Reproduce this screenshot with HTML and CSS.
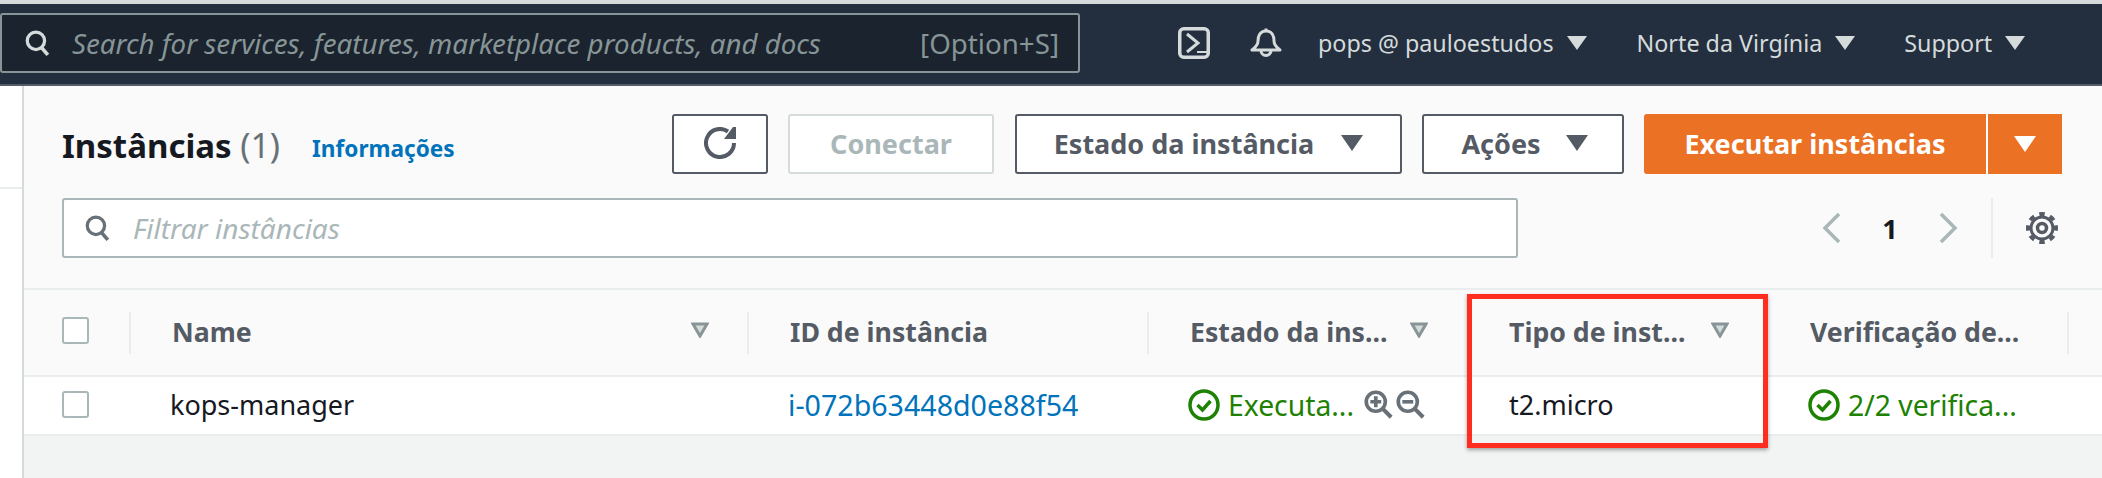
FILE: index.html
```html
<!DOCTYPE html>
<html lang="pt">
<head>
<meta charset="utf-8">
<title>Instâncias</title>
<link rel="stylesheet" href="styles.css">
</head>
<body>
<header class="nav">
  <div class="search">
    <svg class="search-icon" viewBox="0 0 24 24" width="26" height="30"><circle cx="11" cy="10" r="8" fill="none" stroke="currentColor" stroke-width="3"/><path d="M16 16l6 7" stroke="currentColor" stroke-width="3.4" fill="none"/></svg>
    <span class="search-text">Search for services, features, marketplace products, and docs</span>
    <span class="search-key">[Option+S]</span>
  </div>
  <div class="nav-right">
    <svg class="nav-shell" viewBox="0 0 32 32" width="32" height="32"><rect x="1.750" y="1.750" width="28.500" height="28.500" rx="4" fill="none" stroke="currentColor" stroke-width="3.500"/><path d="M9 7l11 9-11 9" fill="none" stroke="currentColor" stroke-width="3"/><path d="M19 25h10" fill="none" stroke="currentColor" stroke-width="2"/></svg>
    <svg class="nav-bell" viewBox="0 0 32 32" width="32" height="32"><path d="M16 1.500v3M16 4c-6 0-8 5-8 10 0 4-2 6-6 9h28c-4-3-6-5-6-9 0-5-2-10-8-10z" fill="none" stroke="currentColor" stroke-width="3" stroke-linejoin="round"/><path d="M11 23.500a5 5 0 1 0 10 0" fill="none" stroke="currentColor" stroke-width="3"/></svg>
    <span class="nav-item nav-user">pops @ pauloestudos<i class="tri tri-nav"></i></span>
    <span class="nav-item nav-region">Norte da Virgínia<i class="tri tri-nav"></i></span>
    <span class="nav-item nav-support">Support<i class="tri tri-nav"></i></span>
  </div>
</header>

<div class="shell">
  <aside class="side"><div class="side-line"></div></aside>
  <main class="main">
    <section class="panel-head">
      <div class="title-row">
        <h1 class="title">Instâncias <span class="count">(1)</span></h1>
        <a class="info">Informações</a>
        <div class="actions">
          <button class="btn btn-icon"><svg viewBox="0 0 32 32" width="32" height="32"><path d="M24 4.500A14 14 0 1 0 30 16" fill="none" stroke="currentColor" stroke-width="4"/><path d="M29 0h3v12H20z" fill="currentColor"/></svg></button>
          <button class="btn btn-off">Conectar</button>
          <button class="btn btn-state">Estado da instância<i class="tri tri-btn tri-wide"></i></button>
          <button class="btn btn-act">Ações<i class="tri tri-btn"></i></button>
          <div class="btn-run"><span class="run-main">Executar instâncias</span><span class="run-drop"><i class="tri tri-white"></i></span></div>
        </div>
      </div>
      <div class="filter-row">
        <div class="filter">
          <svg class="filter-icon" viewBox="0 0 24 24" width="26" height="30"><circle cx="11" cy="10" r="8" fill="none" stroke="currentColor" stroke-width="3"/><path d="M16 16l6 7" stroke="currentColor" stroke-width="3.4" fill="none"/></svg>
          <span class="filter-text">Filtrar instâncias</span>
        </div>
        <div class="pager">
          <svg viewBox="0 0 20 32" width="20" height="32"><path d="M18 2L4 16l14 14" fill="none" stroke="currentColor" stroke-width="3.500"/></svg>
          <span class="page-num">1</span>
          <svg viewBox="0 0 20 32" width="20" height="32"><path d="M2 2l14 14L2 30" fill="none" stroke="currentColor" stroke-width="3.500"/></svg>
        </div>
        <div class="gear-cell">
          <svg viewBox="0 0 32 32" width="32" height="32"><circle cx="16" cy="16" r="11" fill="none" stroke="currentColor" stroke-width="3"/><circle cx="16" cy="16" r="14" fill="none" stroke="currentColor" stroke-width="4" pathLength="80" stroke-dasharray="5 5" stroke-dashoffset="2.500"/><circle cx="16" cy="16" r="4.500" fill="none" stroke="currentColor" stroke-width="3.500"/></svg>
        </div>
      </div>
    </section>

    <section class="table">
      <div class="thead">
        <div class="th th-check"><span class="check check-head"></span></div>
        <div class="th th-name"><span class="th-label">Name</span><svg class="sort" viewBox="0 0 18 16" width="18" height="16"><path d="M2 2h14L9 14z" fill="#d5dbdb" stroke="#879596" stroke-width="3"/></svg></div>
        <div class="th th-id"><span class="th-label">ID de instância</span></div>
        <div class="th th-state"><span class="th-label">Estado da ins...</span><svg class="sort" viewBox="0 0 18 16" width="18" height="16"><path d="M2 2h14L9 14z" fill="#d5dbdb" stroke="#879596" stroke-width="3"/></svg></div>
        <div class="th th-type"><span class="th-label">Tipo de inst...</span><svg class="sort" viewBox="0 0 18 16" width="18" height="16"><path d="M2 2h14L9 14z" fill="#d5dbdb" stroke="#879596" stroke-width="3"/></svg></div>
        <div class="th th-ver"><span class="th-label">Verificação de...</span></div>
        <div class="th th-end"></div>
      </div>
      <div class="trow">
        <div class="td th-check"><span class="check"></span></div>
        <div class="td td-shift">kops-manager</div>
        <div class="td td-shift"><a class="link">i-072b63448d0e88f54</a></div>
        <div class="td td-status">
          <svg class="ok" viewBox="0 0 32 32" width="32" height="32"><circle cx="16" cy="16" r="14" fill="none" stroke="currentColor" stroke-width="3.500"/><path d="M9.500 16l5 5 8-9" fill="none" stroke="currentColor" stroke-width="3.500"/></svg>
          <span class="ok-text">Executa...</span>
          <svg class="zoom-ic" viewBox="0 0 32 32" width="29" height="29"><circle cx="13" cy="13" r="10.500" fill="none" stroke="currentColor" stroke-width="4"/><path d="M20 20l10 10" stroke="currentColor" stroke-width="4.500"/><path d="M7 13h12M13 7v12" stroke="currentColor" stroke-width="4"/></svg>
          <svg class="zoom-ic" viewBox="0 0 32 32" width="29" height="29"><circle cx="13" cy="13" r="10.500" fill="none" stroke="currentColor" stroke-width="4"/><path d="M20 20l10 10" stroke="currentColor" stroke-width="4.500"/><path d="M7 13h12" stroke="currentColor" stroke-width="4"/></svg>
        </div>
        <div class="td">t2.micro</div>
        <div class="td td-status">
          <svg class="ok" viewBox="0 0 32 32" width="32" height="32"><circle cx="16" cy="16" r="14" fill="none" stroke="currentColor" stroke-width="3.500"/><path d="M9.500 16l5 5 8-9" fill="none" stroke="currentColor" stroke-width="3.500"/></svg>
          <span class="ok-text">2/2 verifica...</span>
        </div>
        <div class="td"></div>
      </div>
    </section>
    <div class="below"></div>
    <div class="highlight"></div>
  </main>
</div>
</body>
</html>
```

FILE: styles.css
```css
* { box-sizing: border-box; }
html, body { margin: 0; padding: 0; height: 478px; overflow: hidden; background: #fff; }
body { font-family: "Noto Sans", "Open Sans", sans-serif; color: #16191f; position: relative; }

.nav { height: 86px; border-top: 4px solid #d5dbdb; border-bottom: 2px solid #545b64; background: #232f3e; display: flex; align-items: center; padding-bottom: 2px; }
.search { width: 1080px; height: 60px; background: #1a232e; border: 2px solid #879596; border-radius: 3px; display: flex; align-items: center; padding: 0 19px 0 22px; color: #879596; font-size: 27.7px; flex: none; }
.search-icon { color: #d5dbdb; flex: none; margin-right: 22px; }
.search-text { font-style: italic; white-space: nowrap; }
.search-key { margin-left: auto; white-space: nowrap; }

.nav-right { flex: 1; display: flex; align-items: center; color: #d5dbdb; font-size: 23.3px; padding-left: 98px; }
.nav-shell { margin-right: 40px; flex: none; }
.nav-bell { margin-right: 36px; flex: none; }
.nav-item { display: flex; align-items: center; white-space: nowrap; }
.nav-user { margin-right: 50px; }
.nav-region { margin-right: 49px; }

.tri { display: inline-block; width: 0; height: 0; border-style: solid; border-color: transparent; }
.tri-nav { border-width: 14px 10px 0; border-top-color: #d5dbdb; margin-left: 13px; }
.tri-btn { border-width: 16px 11px 0; border-top-color: #545b64; margin-left: 25px; }
.tri-wide { margin-left: 27px; }
.tri-white { border-width: 16px 11px 0; border-top-color: #fff; }

.shell { display: flex; height: 392px; }
.side { width: 24px; flex: none; background: #fff; border-right: 2px solid #d5dbdb; }
.side-line { height: 103px; border-bottom: 2px solid #eaeded; }
.main { flex: 1; background: #fafafa; position: relative; display: flex; flex-direction: column; min-width: 0; }

.panel-head { height: 204px; flex: none; padding: 28px 40px 0 38px; border-bottom: 2px solid #eaeded; }
.title-row { display: flex; align-items: center; height: 60px; }
.title { margin: 2px 0 0; font-size: 33px; font-weight: 700; color: #16191f; line-height: 1; white-space: nowrap; }
.count { font-weight: 400; color: #687078; font-size: 34px; }
.info { margin: 8px 0 0 32px; font-size: 22.6px; font-weight: 700; color: #0073bb; white-space: nowrap; }
.actions { margin-left: auto; display: flex; align-items: stretch; height: 60px; }
.btn { height: 60px; background: #fff; border: 2px solid #545b64; border-radius: 3px; color: #545b64; font: 700 27px "Noto Sans", "Open Sans", sans-serif; display: flex; align-items: center; justify-content: center; white-space: nowrap; padding: 0 0 2px; }
.btn-icon { width: 96px; margin-right: 20px; }
.btn-off { width: 206px; margin-right: 21px; border-color: #d5dbdb; color: #aab7b8; }
.btn-state { width: 387px; margin-right: 20px; }
.btn-act { width: 202px; margin-right: 20px; padding-left: 3px; }
.btn-run { width: 418px; display: flex; background: #eb7125; border-radius: 3px 0 0 3px; color: #fff; font-weight: 700; font-size: 27px; }
.run-main { width: 344px; display: flex; align-items: center; justify-content: center; border-right: 2px solid #fff; white-space: nowrap; padding-bottom: 2px; }
.run-drop { flex: 1; display: flex; align-items: center; justify-content: center; }

.filter-row { display: flex; align-items: center; margin-top: 24px; height: 60px; }
.filter { width: 1456px; height: 60px; background: #fff; border: 2px solid #aab7b8; border-radius: 3px; display: flex; align-items: center; padding-left: 20px; flex: none; }
.filter-icon { color: #687078; flex: none; margin-right: 23px; }
.filter-text { font-style: italic; font-size: 28px; color: #aab7b8; white-space: nowrap; }
.pager { margin-left: 303px; width: 138px; display: flex; align-items: center; justify-content: space-between; color: #aab7b8; flex: none; }
.page-num { font-size: 27px; font-weight: 700; color: #16191f; }
.gear-cell { width: 68px; margin-left: 32px; height: 60px; border-left: 2px solid #eaeded; display: flex; align-items: center; padding-left: 33px; color: #545b64; flex: none; }

.table { flex: none; }
.thead, .trow { display: grid; grid-template-columns: 107px 618px 400px 319px 301px 300px 1fr; }
.thead { height: 87px; border-bottom: 2px solid #eaeded; }
.trow { height: 59px; background: #fff; border-bottom: 2px solid #eaeded; }
.th, .td { display: flex; align-items: center; padding: 0 0 2px 41px; min-width: 0; white-space: nowrap; }
.th { position: relative; font-weight: 700; font-size: 26.7px; color: #545b64; }
.th::after { content: ""; position: absolute; right: 0; top: 22px; height: 42px; width: 2px; background: #eaeded; }
.th-check { padding-left: 38px; }
.td-shift { padding-left: 39px; }
.td-status { padding-left: 39px; }
.th-type::after, .th-state::after, .th-end::after { display: none; }
.td { font-size: 27px; color: #16191f; }
.check { width: 27px; height: 27px; background: #fff; border: 2px solid #aab7b8; border-radius: 3px; }
.check-head { margin-bottom: 2px; }
.sort { margin-left: auto; margin-right: 40px; flex: none; margin-bottom: 4px; }
.link { color: #0073bb; font-size: 28.6px; }
.ok { color: #1d8102; flex: none; margin-right: 8px; }
.ok-text { color: #1d8102; font-size: 28.3px; }
.zoom-ic { color: #687078; flex: none; margin-left: 3px; }
.ok-text + .zoom-ic { margin-left: 10px; }
.below { flex: 1; background: #f2f3f3; }
.highlight { position: absolute; left: 1443px; top: 208px; width: 301px; height: 154px; border: 5px solid #ff2d20; box-shadow: 0 2px 4px rgba(0,0,0,.35); }
```
